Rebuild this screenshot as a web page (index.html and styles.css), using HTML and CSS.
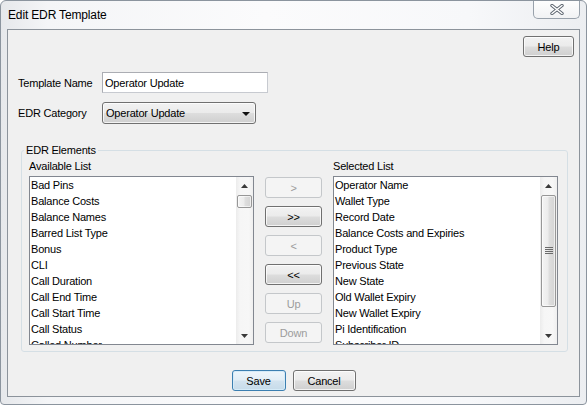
FILE: index.html
```html
<!DOCTYPE html>
<html>
<head>
<meta charset="utf-8">
<title>Edit EDR Template</title>
<link rel="stylesheet" href="styles.css">
</head>
<body>
<div class="window">
  <div class="titlebar">
    <span class="title">Edit EDR Template</span>
    <div class="close">
      <svg width="14" height="11" viewBox="0 0 14 11">
        <line x1="2" y1="1.5" x2="12" y2="9.5" stroke="#5e6670" stroke-width="3.4" stroke-linecap="round"/>
        <line x1="12" y1="1.5" x2="2" y2="9.5" stroke="#5e6670" stroke-width="3.4" stroke-linecap="round"/>
        <line x1="2" y1="1.5" x2="12" y2="9.5" stroke="#ffffff" stroke-width="1.5" stroke-linecap="round"/>
        <line x1="12" y1="1.5" x2="2" y2="9.5" stroke="#ffffff" stroke-width="1.5" stroke-linecap="round"/>
      </svg>
    </div>
  </div>
  <div class="client">
    <div class="help-row"><button class="btn help">Help</button></div>
    <div class="form-row row-name">
      <label class="form-label">Template Name</label>
      <input class="text" type="text" value="Operator Update">
    </div>
    <div class="form-row row-cat">
      <label class="form-label">EDR Category</label>
      <div class="combo">
        <span>Operator Update</span>
        <svg class="combo-arrow" width="8" height="4" viewBox="0 0 8 4"><polygon points="0,0 8,0 4,4" fill="#111"/></svg>
      </div>
    </div>
    <fieldset class="group">
      <legend>EDR Elements</legend>
      <div class="lists">
        <div class="list-label">Available List</div>
        <div></div>
        <div class="list-label">Selected List</div>

        <div class="listbox">
          <div class="items">
            <div class="item">Bad Pins</div>
            <div class="item">Balance Costs</div>
            <div class="item">Balance Names</div>
            <div class="item">Barred List Type</div>
            <div class="item">Bonus</div>
            <div class="item">CLI</div>
            <div class="item">Call Duration</div>
            <div class="item">Call End Time</div>
            <div class="item">Call Start Time</div>
            <div class="item">Call Status</div>
            <div class="item">Called Number</div>
          </div>
          <div class="scrollbar">
            <div class="sb-btn"><svg width="7" height="4" viewBox="0 0 7 4"><polygon points="0,4 7,4 3.5,0" fill="#3a3a3a"/></svg></div>
            <div class="sb-track"><div class="thumb thumb-small"></div></div>
            <div class="sb-btn"><svg width="7" height="4" viewBox="0 0 7 4"><polygon points="0,0 7,0 3.5,4" fill="#3a3a3a"/></svg></div>
          </div>
        </div>

        <div class="move-buttons">
          <button class="btn" disabled>&gt;</button>
          <button class="btn">&gt;&gt;</button>
          <button class="btn" disabled>&lt;</button>
          <button class="btn">&lt;&lt;</button>
          <button class="btn" disabled>Up</button>
          <button class="btn" disabled>Down</button>
        </div>

        <div class="listbox">
          <div class="items">
            <div class="item">Operator Name</div>
            <div class="item">Wallet Type</div>
            <div class="item">Record Date</div>
            <div class="item">Balance Costs and Expiries</div>
            <div class="item">Product Type</div>
            <div class="item">Previous State</div>
            <div class="item">New State</div>
            <div class="item">Old Wallet Expiry</div>
            <div class="item">New Wallet Expiry</div>
            <div class="item">Pi Identification</div>
            <div class="item">Subscriber ID</div>
          </div>
          <div class="scrollbar">
            <div class="sb-btn"><svg width="7" height="4" viewBox="0 0 7 4"><polygon points="0,4 7,4 3.5,0" fill="#3a3a3a"/></svg></div>
            <div class="sb-track">
              <div class="thumb thumb-big">
                <svg width="8" height="8" viewBox="0 0 8 8">
                  <line x1="0" y1="0.5" x2="8" y2="0.5" stroke="#6a6a6a"/>
                  <line x1="0" y1="2.5" x2="8" y2="2.5" stroke="#6a6a6a"/>
                  <line x1="0" y1="4.5" x2="8" y2="4.5" stroke="#6a6a6a"/>
                  <line x1="0" y1="6.5" x2="8" y2="6.5" stroke="#6a6a6a"/>
                </svg>
              </div>
            </div>
            <div class="sb-btn"><svg width="7" height="4" viewBox="0 0 7 4"><polygon points="0,0 7,0 3.5,4" fill="#3a3a3a"/></svg></div>
          </div>
        </div>
      </div>
    </fieldset>
    <div class="footer">
      <button class="btn default save">Save</button>
      <button class="btn cancel">Cancel</button>
    </div>
  </div>
</div>
</body>
</html>
```
FILE: styles.css
```css
html, body {
  margin: 0;
  padding: 0;
  background: #ffffff;
}
body {
  font-family: "Liberation Sans", Arial, sans-serif;
  font-size: 11px;
  letter-spacing: -0.2px;
  color: #000;
}
.window {
  box-sizing: border-box;
  width: 587px;
  height: 405px;
  border: 1px solid #8b949e;
  border-radius: 6px 6px 4px 4px;
  background: linear-gradient(to right, #e6e8eb 0%, #f4f5f7 8%, #fbfbfc 45%, #f7f8fa 80%, #eceef1 100%);
  display: flex;
  flex-direction: column;
  overflow: hidden;
}
.titlebar {
  height: 28px;
  flex-shrink: 0;
  display: flex;
  justify-content: space-between;
  align-items: flex-start;
}
.title {
  padding: 7px 0 0 7px;
  font-size: 12px;
  line-height: 14px;
  letter-spacing: -0.15px;
}
.close {
  box-sizing: border-box;
  width: 47px;
  height: 18px;
  margin-right: 6px;
  border: 1px solid #98a1ab;
  border-top: none;
  border-radius: 0 0 5px 5px;
  background: linear-gradient(#fefefe, #f1f2f4);
  display: flex;
  align-items: center;
  justify-content: center;
}
.client {
  flex: 1;
  margin: 0 6px 7px 6px;
  border: 1px solid #8c939b;
  background: #f0f0f0;
  display: flex;
  flex-direction: column;
}
.btn {
  box-sizing: border-box;
  height: 21px;
  margin: 0;
  padding: 0;
  font-family: "Liberation Sans", Arial, sans-serif;
  font-size: 11px;
  letter-spacing: -0.2px;
  color: #000;
  border: 1px solid #707070;
  border-radius: 3px;
  background: linear-gradient(#f2f2f2 0%, #ebebeb 48%, #dddddd 52%, #cfcfcf 100%);
  box-shadow: inset 0 0 0 1px rgba(255, 255, 255, 0.75);
}
.btn:disabled {
  border-color: #c4c7ca;
  background: #f4f4f4;
  color: #9c9c9c;
  box-shadow: none;
}
.btn.default {
  border-color: #3c7fb1;
  background: linear-gradient(#eef6fb 0%, #e3eef6 48%, #d3e3ef 52%, #c6dbea 100%);
  box-shadow: inset 0 0 0 1px #d6ebf8;
}
.help-row {
  display: flex;
  justify-content: flex-end;
  margin-top: 6px;
  padding-right: 5px;
}
.help {
  width: 51px;
}
.form-row {
  display: flex;
  align-items: center;
  padding-left: 10px;
}
.row-name {
  margin-top: 15px;
}
.row-cat {
  margin-top: 9px;
}
.form-label {
  width: 84px;
  flex-shrink: 0;
}
.text {
  box-sizing: border-box;
  width: 166px;
  height: 21px;
  margin: 0;
  padding: 0 2px;
  border: 1px solid #abadb3;
  border-right-color: #c7cad0;
  border-bottom-color: #c7cad0;
  background: #fff;
  font-family: "Liberation Sans", Arial, sans-serif;
  font-size: 11px;
  letter-spacing: -0.2px;
  color: #000;
  outline: none;
}
.combo {
  box-sizing: border-box;
  width: 154px;
  height: 22px;
  display: flex;
  align-items: center;
  justify-content: space-between;
  padding: 0 5px 0 3px;
  border: 1px solid #707070;
  border-radius: 3px;
  background: linear-gradient(#f2f2f2 0%, #ebebeb 48%, #dddddd 52%, #cfcfcf 100%);
  box-shadow: inset 0 0 0 1px rgba(255, 255, 255, 0.75);
}
.combo-arrow {
  margin-top: 2px;
}
.group {
  margin: 19px 11px 0 13px;
  padding: 2px 8px 6px 7px;
  border: 1px solid #d5dfe5;
  border-radius: 3px;
  min-width: 0;
}
.group legend {
  padding: 0 2px;
  margin-left: -5px;
  line-height: 14px;
  font-size: 11px;
}
.lists {
  display: grid;
  grid-template-columns: 225px 57px 225px;
  column-gap: 11px;
  grid-template-rows: 14px 169px;
  row-gap: 3px;
}
.list-label {
  line-height: 14px;
  white-space: nowrap;
}
.listbox {
  box-sizing: border-box;
  border: 1px solid #828790;
  background: #fff;
  display: flex;
  overflow: hidden;
}
.items {
  flex: 1;
  overflow: hidden;
  padding-left: 1px;
}
.item {
  height: 16px;
  line-height: 16px;
  white-space: nowrap;
}
.scrollbar {
  width: 17px;
  flex-shrink: 0;
  display: flex;
  flex-direction: column;
  background: linear-gradient(to right, #ececec 0%, #f6f6f6 25%, #f7f7f7 75%, #efefef 100%);
}
.sb-btn {
  height: 17px;
  flex-shrink: 0;
  display: flex;
  align-items: center;
  justify-content: center;
}
.sb-track {
  flex: 1;
  display: flex;
  flex-direction: column;
  align-items: center;
}
.thumb {
  box-sizing: border-box;
  width: 15px;
  margin-top: 1px;
  border: 1px solid #979797;
  border-radius: 2px;
  background: linear-gradient(to right, #f4f4f4 0%, #ececec 45%, #dedede 55%, #d4d4d4 100%);
  box-shadow: inset 0 0 0 1px rgba(255, 255, 255, 0.6);
  display: flex;
  align-items: center;
  justify-content: center;
}
.thumb-small {
  height: 13px;
}
.thumb-big {
  height: 112px;
}
.move-buttons {
  display: flex;
  flex-direction: column;
  gap: 8px;
  padding-top: 1px;
}
.move-buttons .btn {
  width: 57px;
}
.footer {
  display: flex;
  justify-content: center;
  gap: 7px;
  margin-top: 18px;
}
.save {
  width: 54px;
}
.cancel {
  width: 63px;
}
```
